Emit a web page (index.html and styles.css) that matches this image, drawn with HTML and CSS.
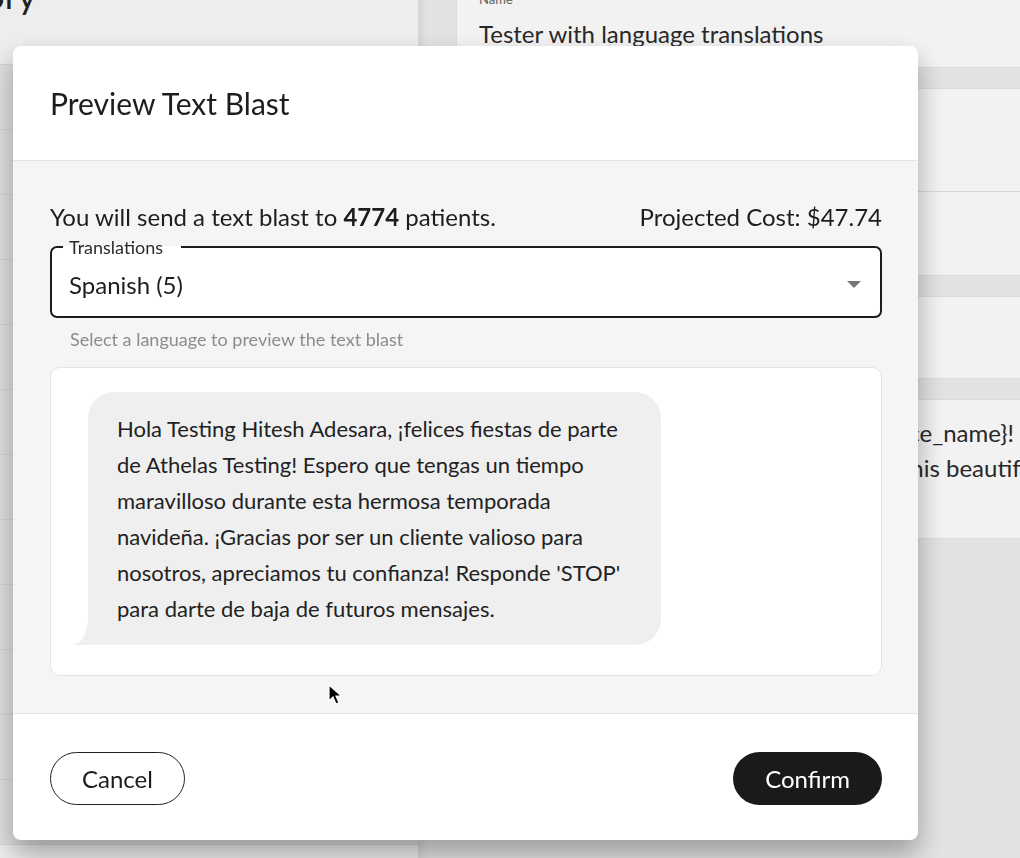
FILE: index.html
```html
<!DOCTYPE html>
<html lang="en">
<head>
    <meta charset="UTF-8">
    <meta name="viewport" content="width=device-width, initial-scale=1.0">
    <title>Preview Text Blast</title>
    <link rel="stylesheet" href="styles.css">
</head>
<body>

    <!-- Página de fondo (detrás del modal) -->
    <div class="page">
        <aside class="history">
            <h1>History</h1>
            <div class="history-list">
                <div class="history-row"></div>
                <div class="history-row"></div>
                <div class="history-row"></div>
                <div class="history-row"></div>
                <div class="history-row"></div>
                <div class="history-row"></div>
                <div class="history-row"></div>
                <div class="history-row"></div>
                <div class="history-row"></div>
                <div class="history-row"></div>
                <div class="history-row"></div>
                <div class="history-row"></div>
            </div>
        </aside>
        <main class="editor">
            <div class="box box-name">
                <span class="box-label">Name</span>
                <p class="box-value">Tester with language translations</p>
            </div>
            <div class="box box-split">
                <div class="box-part part-top"></div>
                <div class="box-part part-bottom"></div>
            </div>
            <div class="box box-short"></div>
            <div class="box box-message">
                <p>Hello {name}, happy holidays from {practice_name}!<br>
                Hope you have a wonderful time during this beautiful holiday season.</p>
            </div>
        </main>
    </div>

    <!-- Modal -->
    <div class="backdrop">
        <section class="dialog">
            <header class="dialog-head">
                <h2>Preview Text Blast</h2>
            </header>
            <div class="dialog-body">
                <div class="summary">
                    <span>You will send a text blast to <strong>4774</strong> patients.</span>
                    <span>Projected Cost: $47.74</span>
                </div>
                <fieldset class="select">
                    <legend>Translations</legend>
                    <div class="select-value">
                        <span>Spanish (5)</span>
                        <svg width="14" height="7" viewBox="0 0 14 7"><path d="M0 0h14L7 7z" fill="#767676"/></svg>
                    </div>
                </fieldset>
                <p class="helper">Select a language to preview the text blast</p>
                <div class="preview">
                    <div class="bubble">Hola Testing Hitesh Adesara, ¡felices fiestas de parte de Athelas Testing! Espero que tengas un tiempo maravilloso durante esta hermosa temporada navideña. ¡Gracias por ser un cliente valioso para nosotros, apreciamos tu confianza! Responde 'STOP' para darte de baja de futuros mensajes.</div>
                </div>
            </div>
            <footer class="dialog-foot">
                <button class="btn btn-outline">Cancel</button>
                <button class="btn btn-dark">Confirm</button>
            </footer>
        </section>
    </div>

    <svg class="cursor" width="14" height="22" viewBox="0 0 14 22">
        <path d="M1 1v16l4-4 3 7 3-1.3-3-6.7h5.5z" fill="#000" stroke="#fff" stroke-width="1.2"/>
    </svg>

</body>
</html>
```

FILE: styles.css
```css
* { box-sizing: border-box; }

body {
    margin: 0;
    height: 858px;
    overflow: hidden;
    font-family: Lato, "Noto Sans", sans-serif;
    background-color: #eaeaea;
    color: #1d1d1d;
}

/* ---- página de fondo ---- */
.page {
    display: flex;
    width: 1300px;
    height: 900px;
    margin: -26px 0 0 -92px;
}

.history {
    position: relative;
    z-index: 1;
    flex: none;
    width: 510px;
    padding-left: 12px;
    background-color: #f5f5f5;
    box-shadow: 3px 0 8px rgba(0,0,0,0.08);
}
.history h1 { margin: 0; font-size: 36px; line-height: 42px; font-weight: 400; color: #222; }
.history-list { margin: 48px 0 0 -12px; border-top: 1px solid #dcdcdc; }
.history-row { height: 65px; border-bottom: 1px solid #dcdcdc; background-color: #e8e8e8; }

.editor {
    flex: 1;
    min-width: 0;
    display: flex;
    flex-direction: column;
    gap: 20px;
    padding: 12px 0 0 38px;
}
.box { background-color: #fafafa; border: 1px solid #e2e2e2; border-radius: 6px; }
.box-name { height: 82px; padding: 4px 22px 0; }
.box-label { display: block; font-size: 13px; line-height: 16px; color: #666; }
.box-value { margin: 12px 0 0; font-size: 24px; line-height: 30px; color: #2a2a2a; }
.part-top { height: 103px; border-bottom: 1px solid #dedede; }
.part-bottom { height: 83px; }
.box-short { height: 83px; }
.box-message { height: 140px; padding: 15px 22px 0; overflow: hidden; }
.box-message p { margin: 0; font-size: 24px; line-height: 35px; white-space: nowrap; color: #2a2a2a; }

/* ---- modal ---- */
.backdrop {
    position: fixed;
    z-index: 10;
    inset: 0;
    padding: 46px 0 0 13px;
    background-color: rgba(0,0,0,0.03);
}

.dialog {
    width: 905px;
    height: 794px;
    display: flex;
    flex-direction: column;
    background-color: #fff;
    border-radius: 8px;
    overflow: hidden;
    box-shadow: 0 14px 28px rgba(0,0,0,0.32);
}

.dialog-head {
    height: 115px;
    display: flex;
    align-items: center;
    padding: 0 36px 0 37px;
    border-bottom: 1px solid #e4e4e4;
}
.dialog-head h2 { margin: 0; font-size: 30px; font-weight: 400; color: #1d1d1d; }

.dialog-body {
    flex: 1;
    background-color: #f5f5f5;
    padding: 43px 36px 0 37px;
    border-bottom: 1px solid #e4e4e4;
}

.summary { display: flex; justify-content: space-between; font-size: 24px; line-height: 26px; }
.summary strong { font-weight: 700; }

.select {
    margin: 8px 0 0;
    padding: 0 19px 0 17px;
    min-width: 0;
    border: 2.5px solid #1c1c1c;
    border-radius: 7px;
    background-color: #fff;
}
.select legend {
    margin-left: -6px;
    padding: 0 18px 0 6px;
    font-size: 18px;
    line-height: 18px;
    color: #2a2a2a;
}
.select-value {
    height: 60px;
    padding-bottom: 4px;
    display: flex;
    align-items: center;
    justify-content: space-between;
    font-size: 24px;
}

.helper { margin: 12px 0 0 20px; font-size: 18px; line-height: 18px; color: #8c8c8c; }

.preview {
    margin-top: 19px;
    height: 309px;
    padding: 24px 38px 0 37px;
    background-color: #fff;
    border: 1px solid #e4e4e4;
    border-radius: 10px;
}

.bubble {
    position: relative;
    width: 573px;
    padding: 19px 24px 18px 29px;
    background-color: #efefef;
    border-radius: 26px 26px 26px 0;
    font-size: 22px;
    line-height: 36px;
    color: #222;
}
/* colita de la burbuja */
.bubble::before {
    content: "";
    position: absolute;
    left: -16px;
    bottom: 0;
    width: 16px;
    height: 28px;
    background-color: #efefef;
}
.bubble::after {
    content: "";
    position: absolute;
    left: -20px;
    bottom: 0;
    width: 20px;
    height: 28px;
    background-color: #fff;
    border-bottom-right-radius: 16px 28px;
}

.dialog-foot {
    height: 126px;
    padding: 3px 36px 0 37px;
    display: flex;
    align-items: center;
    justify-content: space-between;
}
.btn {
    height: 53px;
    padding: 0 31px;
    border-radius: 27px;
    font-family: inherit;
    font-size: 24px;
    cursor: pointer;
}
.btn-outline { background-color: #fff; border: 1.5px solid #222; color: #1d1d1d; }
.btn-dark { background-color: #1a1a1a; border: none; color: #fff; padding: 0 32px; }

.cursor { position: fixed; z-index: 11; left: 328px; top: 684px; }
```
